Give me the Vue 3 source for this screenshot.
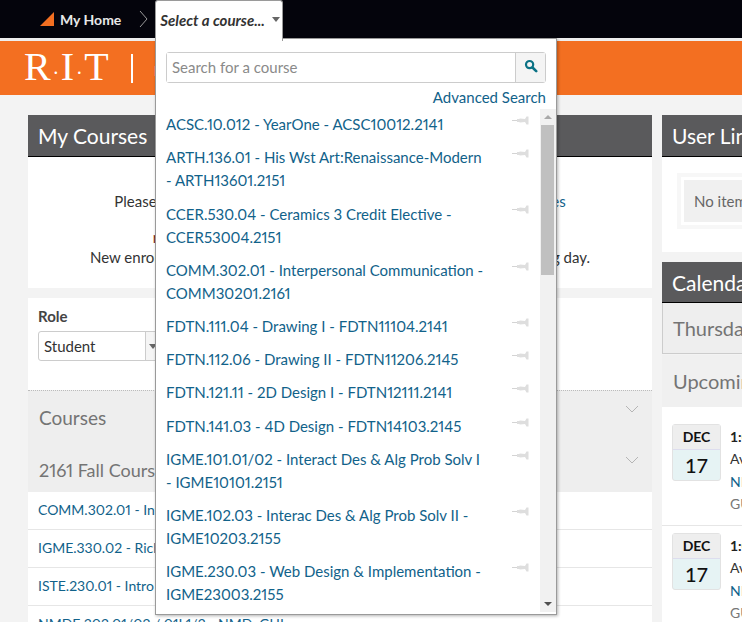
<template>
  <div class="page">
    <header class="topbar">
      <a class="home">
        <svg class="home-mark" width="14" height="14" viewBox="0 0 14 14"><path d="M0 14 L14 0 L14 14 Z" fill="#f36f21" /></svg>
        My Home
      </a>
      <svg class="crumb" width="10" height="20" viewBox="0 0 10 20"><path d="M1 2 L8 10 L1 18" fill="none" stroke="#9a9a9a" stroke-width="1" /></svg>
      <div class="picker">
        <span>Select a course...</span>
        <i class="caret"></i>
      </div>
    </header>

    <div class="brand">
      <span class="logo">R<small>·</small>I<small>·</small>T</span>
      <span class="brand-rule"></span>
      <span class="brand-name">myCourses</span>
    </div>

    <main class="columns">
      <section class="col-left">
        <h2 class="bar">My Courses</h2>
        <div class="notice">
          <p>Please visit the new enrollment and registration status <a>support pages</a></p>
          <p class="warn">registered students will only see their active courses here</p>
          <p>New enrollments and all course changes can take up to one full working day.</p>
        </div>

        <div class="courses">
          <div class="role">
            <label>Role</label>
            <div class="role-select">
              <span>Student</span>
              <b><i class="caret"></i></b>
            </div>
          </div>
          <div class="band">
            <div class="band-row first">
              <span>Courses</span>
              <svg width="14" height="8" viewBox="0 0 14 8"><path d="M1 1 L7 7 L13 1" fill="none" stroke="#b5b5b5" /></svg>
            </div>
            <div class="band-row">
              <span class="term">2161 Fall Courses</span>
              <svg width="14" height="8" viewBox="0 0 14 8"><path d="M1 1 L7 7 L13 1" fill="none" stroke="#b5b5b5" /></svg>
            </div>
          </div>
          <a v-for="row in enrolled" :key="row" class="course-row">{{ row }}</a>
        </div>
      </section>

      <aside class="col-right">
        <h2 class="bar">User Links</h2>
        <div class="links">
          <div class="empty"><div>No items to display</div></div>
        </div>

        <h2 class="bar cal">Calendar</h2>
        <div class="today">Thursday, December 17</div>
        <div class="upcoming">Upcoming events</div>
        <div class="events">
          <div v-for="n in 2" :key="n" class="event">
            <div class="tile">
              <b>DEC</b>
              <span>17</span>
            </div>
            <div class="event-text">
              <strong>1:00 PM</strong>
              <span>Available</span>
              <a>NMDE.302</a>
              <em>GUI Design</em>
            </div>
          </div>
        </div>
      </aside>
    </main>

    <div class="dropdown">
      <div class="search">
        <input type="text" placeholder="Search for a course" />
        <button>
          <svg width="14" height="14" viewBox="0 0 14 14"><circle cx="5.6" cy="5.6" r="3.6" fill="none" stroke="#0b7285" stroke-width="2.2" /><path d="M8.5 8.5 L12.2 12.2" stroke="#0b7285" stroke-width="2.6" stroke-linecap="round" /></svg>
        </button>
      </div>
      <a class="advanced">Advanced Search</a>
      <div class="list">
        <ul>
          <li v-for="item in courses" :key="item[0]">
            <a>
              <template v-for="line in item" :key="line">{{ line }}<br /></template>
            </a>
            <svg class="pin" width="17" height="9" viewBox="0 0 17 9">
              <path d="M0 4.5 H6" stroke="#d4d4d4" />
              <path d="M5 3 L7 3 L8 2.5 L13 3 L14.5 0.5 L16.5 0.5 L16.5 8.5 L14.5 8.5 L13 6 L8 6.5 L7 6 L5 6 Z" fill="#dedede" />
            </svg>
          </li>
        </ul>
        <div class="scrollbar">
          <i class="up"></i>
          <div class="thumb"></div>
          <i class="down"></i>
        </div>
      </div>
    </div>
  </div>
</template>

<script setup>
const courses = [
  ['ACSC.10.012 - YearOne - ACSC10012.2141'],
  ['ARTH.136.01 - His Wst Art:Renaissance-Modern', '- ARTH13601.2151'],
  ['CCER.530.04 - Ceramics 3 Credit Elective -', 'CCER53004.2151'],
  ['COMM.302.01 - Interpersonal Communication -', 'COMM30201.2161'],
  ['FDTN.111.04 - Drawing I - FDTN11104.2141'],
  ['FDTN.112.06 - Drawing II - FDTN11206.2145'],
  ['FDTN.121.11 - 2D Design I - FDTN12111.2141'],
  ['FDTN.141.03 - 4D Design - FDTN14103.2145'],
  ['IGME.101.01/02 - Interact Des & Alg Prob Solv I', '- IGME10101.2151'],
  ['IGME.102.03 - Interac Des & Alg Prob Solv II -', 'IGME10203.2155'],
  ['IGME.230.03 - Web Design & Implementation -', 'IGME23003.2155'],
]

const enrolled = [
  'COMM.302.01 - Interpersonal Communication',
  'IGME.330.02 - Rich Media Web Application',
  'ISTE.230.01 - Intro to Database',
  'NMDE.302.01/02 / 01L1/2 - NMD: GUI',
]
</script>

<style>
html, body {
  margin: 0;
  overflow: hidden;
}
</style>

<style scoped>
.page {
  position: relative;
  height: 622px;
  overflow: hidden;
  background: #f3f3f3;
  font-family: "Lato", "Noto Sans", sans-serif;
  font-size: 15px;
  font-variant-numeric: proportional-nums;
  color: #333;
}
a {
  color: #11628a;
}
.topbar {
  display: flex;
  align-items: center;
  height: 38px;
  padding-left: 40px;
  background: #04040c;
  border-bottom: 3px solid #eee;
}
.home {
  display: flex;
  align-items: center;
  gap: 6px;
  color: #e8e8e8;
  font-weight: 700;
  font-size: 14px;
}
.crumb {
  margin-left: 18px;
  margin-right: 6px;
}
.picker {
  box-sizing: border-box;
  display: flex;
  align-items: center;
  gap: 7px;
  width: 128px;
  height: 41px;
  align-self: flex-start;
  padding: 0 0 3px 4px;
  background: #fff;
  border: 1px solid #9a9a9a;
  border-bottom: 0;
  border-radius: 3px 3px 0 0;
  font-style: italic;
  font-weight: 700;
  font-size: 15px;
  white-space: nowrap;
  position: relative;
  z-index: 3;
}
.caret {
  display: inline-block;
  width: 0;
  height: 0;
  border-left: 4px solid transparent;
  border-right: 4px solid transparent;
  border-top: 5px solid #666;
}
.brand {
  display: flex;
  align-items: center;
  height: 54px;
  padding-left: 24px;
  background: #f36f21;
  color: #fff;
}
.logo {
  font-family: "Liberation Serif", serif;
  font-size: 40px;
  line-height: 54px;
  padding-top: 3px;
}
.logo small {
  font-size: 20px;
  margin: 0 1.75px;
}
.brand-rule {
  width: 2px;
  height: 29px;
  margin: 0 21px 0 22px;
  background: #fff;
}
.brand-name {
  font-size: 20px;
}
.columns {
  display: grid;
  grid-template-columns: 624px 300px;
  gap: 10px;
  padding: 20px 0 0 28px;
}
.bar {
  height: 41px;
  margin: 0;
  padding-left: 10px;
  background: #5a5a5c;
  border-bottom: 1px solid #000;
  color: #fff;
  font-size: 21px;
  font-weight: 400;
  line-height: 42px;
}
.notice {
  height: 131px;
  padding-top: 34px;
  box-sizing: border-box;
  background: #fff;
  text-align: center;
  line-height: 20px;
}
.notice p {
  margin: 0;
  white-space: nowrap;
}
.notice .warn {
  margin-top: 16px;
  color: #7a2a20;
}
.courses {
  margin-top: 10px;
  background: #fff;
}
.role {
  height: 92px;
  padding: 9px 10px 0;
  box-sizing: border-box;
}
.role label {
  display: block;
  font-weight: 700;
  color: #444;
  line-height: 18px;
}
.role-select {
  display: flex;
  width: 122px;
  height: 30px;
  margin-top: 6px;
  box-sizing: border-box;
  border: 1px solid #ccc;
  border-radius: 3px;
  line-height: 28px;
}
.role-select span {
  width: 101px;
  padding-left: 5px;
  border-right: 1px solid #ccc;
}
.role-select b {
  flex: 1;
  display: flex;
  align-items: center;
  justify-content: center;
  background: #f5f5f5;
}
.band {
  height: 102px;
  background: #eee;
  border-top: 1px dotted #bbb;
  box-sizing: border-box;
  color: #747474;
}
.band-row {
  display: flex;
  justify-content: space-between;
  align-items: flex-start;
  height: 50px;
  padding: 0 13px 0 11px;
  font-size: 19px;
  line-height: 28px;
}
.band-row.first {
  padding-top: 13px;
  height: 33px;
  margin-bottom: 12px;
  box-sizing: content-box;
}
.band-row svg {
  margin-top: 1px;
}
.band-row:not(.first) svg {
  margin-top: 7px;
}
.band-row .term {
  font-size: 18px;
  margin-top: 7px;
}
.course-row {
  display: block;
  height: 38px;
  box-sizing: border-box;
  padding-left: 10px;
  border-bottom: 1px solid #e6e6e6;
  font-size: 14px;
  line-height: 36px;
  white-space: nowrap;
}
.links {
  height: 95px;
  padding: 16px 0 0 15px;
  box-sizing: border-box;
  background: #fff;
}
.empty {
  height: 56px;
  padding: 3px;
  box-sizing: border-box;
  background: #fff;
  border: 4px solid #f7f7f7;
}
.empty div {
  height: 42px;
  padding-left: 10px;
  background: #f0f0f0;
  color: #666;
  line-height: 42px;
  white-space: nowrap;
}
.cal {
  height: 40px;
  margin-top: 10px;
}
.today {
  height: 51px;
  padding-left: 10px;
  box-sizing: border-box;
  background: #eee;
  border: 1px solid #ccc;
  border-top: 0;
  color: #747474;
  font-size: 20px;
  line-height: 50px;
  white-space: nowrap;
}
.upcoming {
  height: 52px;
  margin-top: 1px;
  padding-left: 11px;
  background: #f0f0f0;
  color: #747474;
  font-size: 20px;
  line-height: 52px;
  white-space: nowrap;
}
.events {
  padding: 17px 0 0 10px;
  background: #fff;
}
.event {
  display: flex;
  gap: 9px;
  height: 101px;
  border-bottom: 1px solid #e6e6e6;
  margin-bottom: 7px;
  margin-left: -10px;
  padding-left: 10px;
}
.tile {
  box-sizing: border-box;
  width: 49px;
  height: 57px;
  border: 1px solid #e2e2e2;
  border-radius: 3px;
  background: #e6f3f4;
  text-align: center;
  color: #111;
  font-variant-numeric: normal;
}
.tile b {
  display: block;
  height: 24px;
  background: #eee;
  border-bottom: 1px solid #dde;
  font-size: 14px;
  line-height: 23px;
}
.tile span {
  font-size: 20px;
  font-weight: 500;
  line-height: 31px;
}
.event-text {
  display: flex;
  flex-direction: column;
  font-size: 14px;
  font-variant-numeric: normal;
  line-height: 22.4px;
  margin-top: 2px;
  white-space: nowrap;
}
.event-text strong {
  color: #222;
}
.event-text em {
  font-style: normal;
  color: #777;
}
.dropdown {
  position: absolute;
  left: 155px;
  top: 38px;
  box-sizing: border-box;
  width: 402px;
  height: 577px;
  padding-top: 13px;
  background: #fff;
  border: 1px solid #9a9a9a;
  box-shadow: 1px 1px 3px rgba(0, 0, 0, 0.3);
  overflow: hidden;
  z-index: 2;
}
.search {
  display: flex;
  height: 31px;
  margin: 0 10px;
  box-sizing: border-box;
  border: 1px solid #ccc;
  border-radius: 3px;
}
.search input {
  flex: 1;
  min-width: 0;
  padding: 0 5px 2px;
  border: 0;
  outline: none;
  font: inherit;
}
.search input::placeholder {
  color: #8a8a8a;
}
.search button {
  width: 30px;
  padding: 0;
  background: #f4f4f4;
  border: 0;
  border-left: 1px solid #ccc;
}
.advanced {
  display: block;
  margin: 4px 10px 0 0;
  text-align: right;
  line-height: 20px;
}
.list {
  display: flex;
  height: 504px;
  margin-top: 1px;
}
.list ul {
  flex: 1;
  margin: 0;
  padding: 0;
  list-style: none;
}
.list li {
  position: relative;
  padding: 5.12px 10px;
  line-height: 23px;
  white-space: nowrap;
}
.pin {
  position: absolute;
  right: 11px;
  top: 8px;
}
.scrollbar {
  position: relative;
  width: 16px;
  background: #f1f1f1;
  margin-top: 1px;
}
.thumb {
  position: absolute;
  left: 1px;
  top: 16px;
  width: 13px;
  height: 150px;
  background: #c0c0c0;
}
.up, .down {
  position: absolute;
  left: 4px;
  width: 0;
  height: 0;
  border-left: 4px solid transparent;
  border-right: 4px solid transparent;
}
.up {
  top: 6px;
  border-bottom: 4px solid #a8a8a8;
}
.down {
  bottom: 6px;
  border-top: 4px solid #505050;
}
</style>
